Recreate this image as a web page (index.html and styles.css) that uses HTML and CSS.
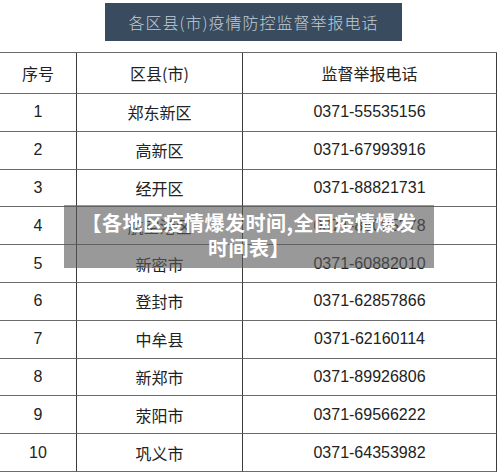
FILE: index.html
```html
<!DOCTYPE html>
<html lang="zh-CN">
<head>
<meta charset="utf-8">
<link rel="stylesheet" href="styles.css">
</head>
<body>
<div class="page">
  <div class="title-bar">各区县(市)疫情防控监督举报电话</div>
  <div class="table">
    <div class="cell head">序号</div><div class="cell head">区县(市)</div><div class="cell head">监督举报电话</div>
    <div class="cell num">1</div><div class="cell">郑东新区</div><div class="cell num">0371-55535156</div>
    <div class="cell num">2</div><div class="cell">高新区</div><div class="cell num">0371-67993916</div>
    <div class="cell num">3</div><div class="cell">经开区</div><div class="cell num">0371-88821731</div>
    <div class="cell num">4</div><div class="cell">航空港区</div><div class="cell num">0371-86095378</div>
    <div class="cell num">5</div><div class="cell">新密市</div><div class="cell num">0371-60882010</div>
    <div class="cell num">6</div><div class="cell">登封市</div><div class="cell num">0371-62857866</div>
    <div class="cell num">7</div><div class="cell">中牟县</div><div class="cell num">0371-62160114</div>
    <div class="cell num">8</div><div class="cell">新郑市</div><div class="cell num">0371-89926806</div>
    <div class="cell num">9</div><div class="cell">荥阳市</div><div class="cell num">0371-69566222</div>
    <div class="cell num">10</div><div class="cell">巩义市</div><div class="cell num">0371-64353982</div>
  </div>
  <div class="caption">【各地区疫情爆发时间,全国疫情爆发时间表】</div>
</div>
</body>
</html>
```
FILE: styles.css
```css
html, body {
  margin: 0;
  padding: 0;
  background: #ffffff;
}
body {
  width: 500px;
  height: 473px;
  overflow: hidden;
  font-family: "Liberation Sans", "Noto Sans CJK SC", sans-serif;
  color: #222222;
}
.page {
  position: relative;
  padding-top: 3px;
}
.title-bar {
  margin-left: 105px;
  width: 297px;
  height: 38px;
  background: #384b5f;
  color: #c3ccd5;
  font-family: "Noto Sans CJK SC", sans-serif;
  font-size: 16px;
  font-weight: 300;
  letter-spacing: 1px;
  display: flex;
  align-items: center;
  justify-content: center;
}
.table {
  margin-top: 11px;
  width: 497px;
  display: grid;
  grid-template-columns: 77px 166px 254px;
  grid-auto-rows: 37.8px;
  grid-template-rows: 41px;
  border-top: 1px solid #6a6a6a;
}
.cell {
  box-sizing: border-box;
  border-bottom: 1px solid #6a6a6a;
  border-right: 1px solid #3c3c3c;
  display: flex;
  align-items: center;
  justify-content: center;
  font-family: "Noto Sans CJK SC", sans-serif;
  font-size: 16px;
  color: #222222;
}
.cell.num {
  font-family: "Liberation Sans", "Noto Sans CJK SC", sans-serif;
  font-size: 16px;
}
.caption {
  position: absolute;
  left: 64px;
  top: 205px;
  width: 370px;
  height: 63px;
  box-sizing: border-box;
  padding: 5px 14px 0;
  background: rgba(90, 90, 90, 0.62);
  color: #ffffff;
  font-family: "Noto Sans CJK SC", sans-serif;
  font-weight: 700;
  font-size: 20px;
  letter-spacing: 0.5px;
  line-height: 25px;
  text-align: center;
}
```
